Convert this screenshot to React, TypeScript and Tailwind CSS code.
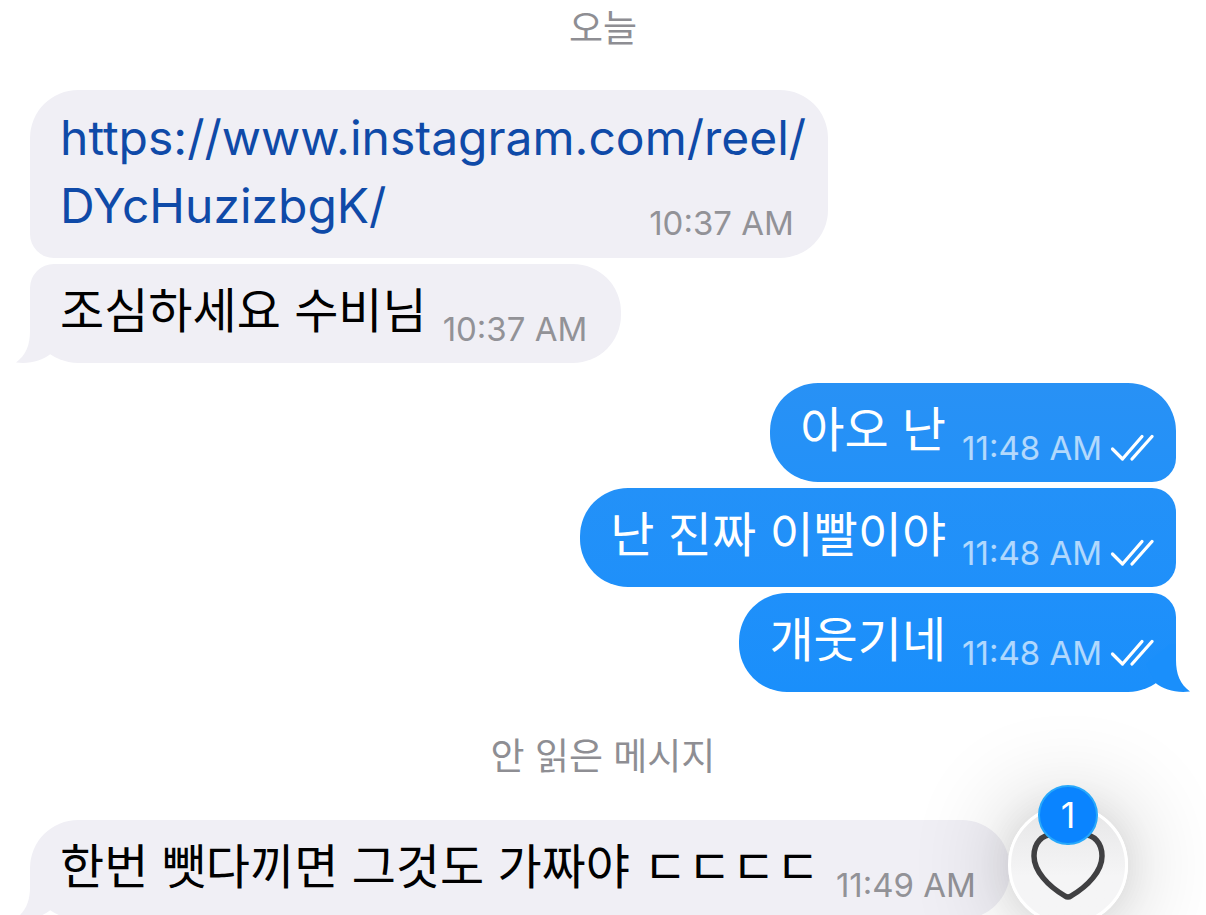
import clsx from "clsx";
import type { ReactNode } from "react";

const KOREAN = "font-['Liberation_Sans','Noto_Sans_CJK_KR',sans-serif]";

function ReadTicks() {
  return (
    <svg
      className="ml-2 h-7 w-11 shrink-0"
      viewBox="0 0 44 28"
      fill="none"
      stroke="white"
      strokeWidth="3.2"
      strokeLinecap="round"
      strokeLinejoin="round"
      role="img"
      aria-label="읽음"
    >
      <path d="M2.5 15 L12.5 25 L32 2.5" />
      <path d="M22 25 L42 2.5" />
    </svg>
  );
}

/** Small hook under the last bubble of a group; mirrored for sent ones. */
function Tail({ sent }: { sent?: boolean }) {
  return (
    <svg
      className={clsx(
        "absolute bottom-0 h-12 w-12",
        sent ? "-right-3.5 -scale-x-100 text-[#1a8ffb]" : "-left-3.5 text-[#f0eff5]"
      )}
      viewBox="0 0 48 48"
      fill="currentColor"
      aria-hidden="true"
    >
      <path d="M14 0 L14 16 C14 30 10 40 0 47.5 C14 49 26 46 34.5 39 L44 20 L20 0 Z" />
    </svg>
  );
}

function Bubble({
  children,
  time,
  sent,
  corners,
  tone,
  tail,
  raised,
}: {
  children: ReactNode;
  time: string;
  sent?: boolean;
  corners: string;
  tone: string;
  tail?: boolean;
  raised?: boolean;
}) {
  return (
    <li
      className={clsx(
        "relative flex max-w-full items-end pt-3.5 pb-[17px]",
        sent ? "self-end pr-[22px] pl-[30px]" : "self-start pr-[34px] pl-[30px]",
        corners,
        tone
      )}
    >
      {tail && <Tail sent={sent} />}
      <p
        className={clsx(
          "relative text-5xl leading-[68px] whitespace-nowrap",
          KOREAN,
          sent ? "text-white" : "text-black"
        )}
      >
        {children}
      </p>
      <span
        className={clsx(
          "relative ml-4 flex items-center",
          raised ? "mb-1" : "-mb-px",
          sent ? "text-white/65" : "text-[#929297]"
        )}
      >
        <Time>{time}</Time>
        {sent && <ReadTicks />}
      </span>
    </li>
  );
}

function Time({ children }: { children: string }) {
  return (
    <time className="font-[Inter,sans-serif] text-[33px] leading-9 whitespace-nowrap">
      {children}
    </time>
  );
}

function Divider({ children }: { children: string }) {
  return (
    <h2 className={clsx("pt-1 text-center text-[37px] leading-[52px] text-[#8e8e93]", KOREAN)}>
      {children}
    </h2>
  );
}

function ReactionButton() {
  return (
    <button
      type="button"
      aria-label="읽지 않은 반응 1개"
      className="absolute right-[78px] -bottom-2.5 size-30 rounded-full border-3 border-white bg-linear-to-b from-[#e6e6e7] to-[#f5f5f6] to-60% shadow-[0_0_100px_rgba(0,0,0,0.24),0_0_36px_rgba(0,0,0,0.07)]"
    >
      <svg
        className="absolute -inset-[3px] size-30"
        viewBox="0 0 120 120"
        fill="none"
        stroke="#404042"
        strokeWidth="5.5"
        strokeLinejoin="round"
        aria-hidden="true"
      >
        <path d="M60 37 C56 32 51 29.5 45 29.5 C34 29.5 26 38 26 51 C26 66 40 81 57 91 Q60 93 63 91 C80 81 94 66 94 51 C94 38 86 29.5 75 29.5 C69 29.5 64 32 60 37 Z" />
      </svg>
      <span className="absolute -top-[23px] left-1/2 flex size-15 -translate-x-1/2 items-center justify-center rounded-full border-2 border-[#27a8fb] bg-[#0a84ff] font-[Inter,sans-serif] text-4xl text-white">
        1
      </span>
    </button>
  );
}

export default function App() {
  return (
    <main className="relative h-screen overflow-hidden bg-white">
      <Divider>오늘</Divider>

      <ul className="mt-[34px] flex flex-col gap-1.5 px-[30px]">
        <li className="flex max-w-full items-end self-start rounded-[48px] rounded-bl-3xl bg-[#f0eff5] pt-3.5 pr-[34px] pb-[18px] pl-[30px]">
          <a
            href="https://www.instagram.com/reel/DYcHuzizbgK/"
            className="font-[Inter,sans-serif] text-5xl leading-[68px] whitespace-nowrap text-[#0f4aa8]"
          >
            https://www.instagram.com/reel/
            <br />
            DYcHuzizbgK/
          </a>
          <span className="-mb-px -ml-[157px] text-[#929297]">
            <Time>10:37 AM</Time>
          </span>
        </li>
        <Bubble time="10:37 AM" corners="rounded-[48px] rounded-tl-3xl" tone="bg-[#f0eff5]" tail>
          조심하세요 수비님
        </Bubble>
      </ul>

      <ul className="mt-5 flex flex-col gap-1.5 px-[30px]">
        <Bubble
          sent
          time="11:48 AM"
          corners="rounded-[48px] rounded-br-3xl"
          tone="bg-linear-to-b from-[#2891f5] to-[#2391f8]"
        >
          아오 난
        </Bubble>
        <Bubble
          sent
          time="11:48 AM"
          corners="rounded-l-[48px] rounded-r-3xl"
          tone="bg-linear-to-b from-[#2391f8] to-[#1f90fa]"
        >
          난 진짜 이빨이야
        </Bubble>
        <Bubble
          sent
          time="11:48 AM"
          corners="rounded-[48px] rounded-tr-3xl"
          tone="bg-linear-to-b from-[#1f90fa] to-[#1a8ffb]"
          tail
          raised
        >
          개웃기네
        </Bubble>
      </ul>

      <div className="mt-9">
        <Divider>안 읽은 메시지</Divider>
      </div>

      <ul className="mt-9 flex flex-col px-[30px]">
        <Bubble time="11:49 AM" corners="rounded-[48px]" tone="bg-[#f0eff5]" tail>
          한번 뺏다끼면 그것도 가짜야 ㄷㄷㄷㄷ
        </Bubble>
      </ul>

      <ReactionButton />
    </main>
  );
}
